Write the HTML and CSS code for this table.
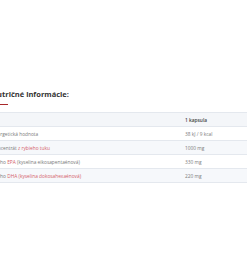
FILE: index.html
```html
<!DOCTYPE html>
<html lang="sk">
<head>
<meta charset="utf-8">
<title>Nutričné informácie</title>
<link rel="stylesheet" href="styles.css">
</head>
<body>
<section class="nutrition">
  <h2 class="nutrition-title">Nutričné informácie:</h2>
  <div class="title-rule"></div>
  <table class="nutrition-table">
    <colgroup>
      <col class="col-name">
      <col class="col-value">
    </colgroup>
    <thead>
      <tr><th></th><th>1 kapsula</th></tr>
    </thead>
    <tbody>
      <tr><td>Energetická hodnota</td><td>38 kJ / 9 kcal</td></tr>
      <tr><td>Koncentrát <a class="link">z rybieho tuku</a></td><td>1000 mg</td></tr>
      <tr><td>z toho <a class="link">EPA</a> (kyselina eikosapentaénová)</td><td>330 mg</td></tr>
      <tr><td>z toho <a class="link">DHA (kyselina dokosahexaénová)</a></td><td>220 mg</td></tr>
    </tbody>
  </table>
</section>
</body>
</html>
```

FILE: styles.css
```css
html, body {
  margin: 0;
  padding: 0;
  background: #ffffff;
}

body {
  font-family: "Open Sans", "Liberation Sans", sans-serif;
  width: 247px;
  height: 278px;
  overflow: hidden;
}

.nutrition {
  margin-left: -14px;
  padding-top: 89px;
  width: 270px;
}

.nutrition-title {
  margin: 0 0 0 5px;
  font-size: 7.5px;
  line-height: 10px;
  font-weight: 700;
  color: #333333;
}

.title-rule {
  margin: 5px 0 0 5px;
  width: 17px;
  height: 1px;
  background: #a8282a;
}

.nutrition-table {
  margin-top: 7px;
  width: 100%;
  border-collapse: collapse;
  table-layout: fixed;
  font-size: 4.8px;
  color: #7a7a7a;
}

.col-name { width: 193px; }

.nutrition-table th,
.nutrition-table td {
  height: 13px;
  padding: 0 0 0 6px;
  border-top: 1px solid #e4e8ee;
  border-bottom: 1px solid #e4e8ee;
  text-align: left;
  white-space: nowrap;
  vertical-align: middle;
}

.nutrition-table th {
  font-weight: 600;
  color: #444444;
  background: #f4f6f9;
}

.nutrition-table tbody tr:nth-child(even) td {
  background: #f6f8fb;
}

.link {
  color: #d4606a;
  text-decoration: none;
}
```
